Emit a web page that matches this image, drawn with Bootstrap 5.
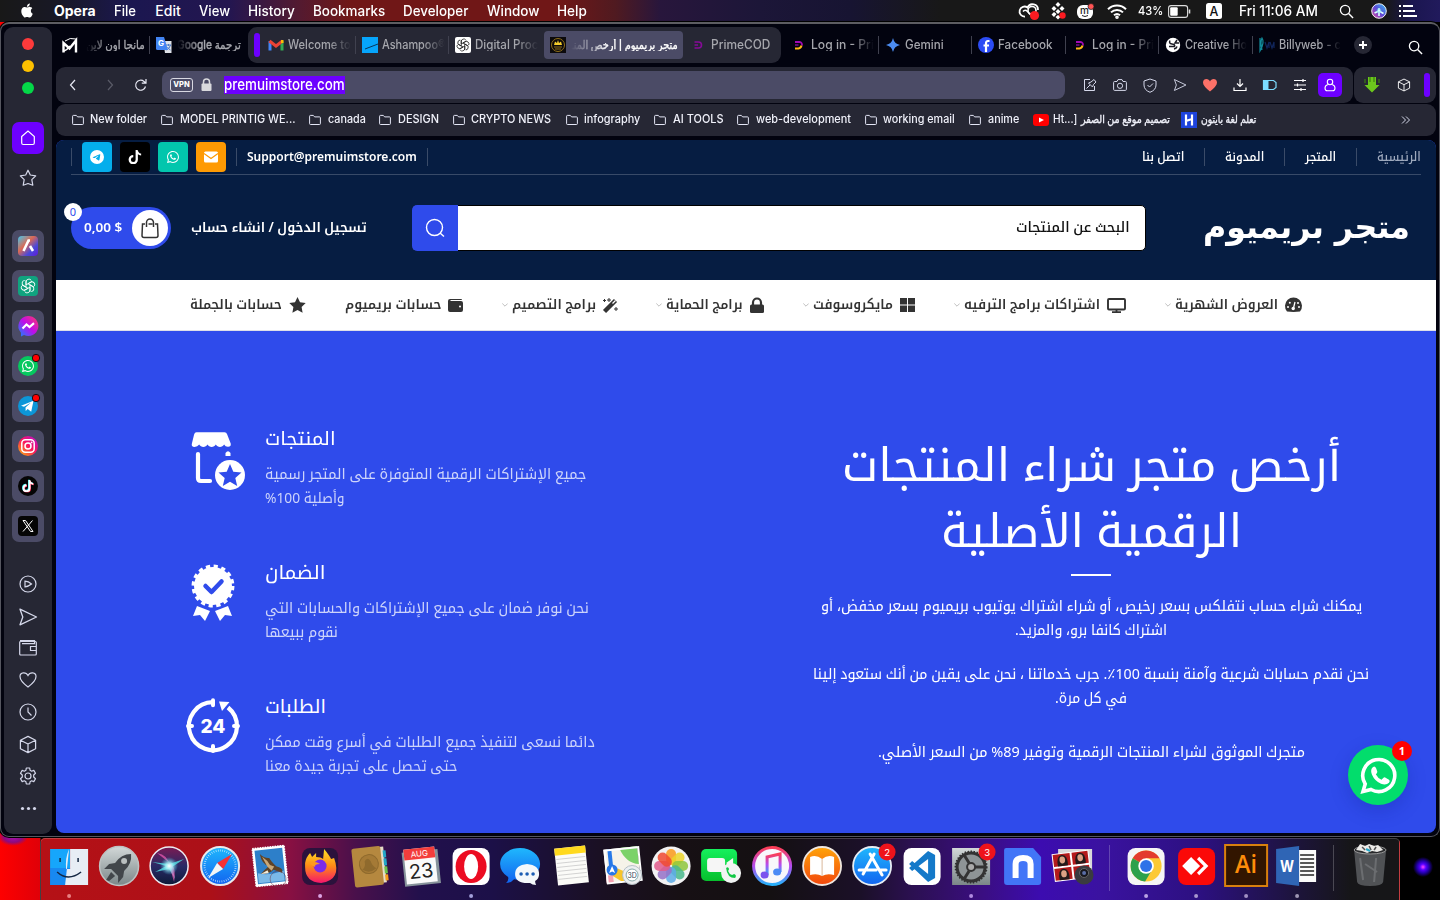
<!DOCTYPE html>
<html lang="ar">
<head>
<meta charset="utf-8">
<meta name="viewport" content="width=device-width, initial-scale=1">
<title>متجر بريميوم</title>
<link href="https://cdn.jsdelivr.net/npm/bootstrap@5.3.0/dist/css/bootstrap.min.css" rel="stylesheet">
<style>
:root{--panel:#262734;--ink:#02030f;--violet:#6d00ff;--brand:#2f4beb;--navy:#061d42}
body{width:1440px;height:900px;overflow:hidden;background:#000;font-family:Inter,"DejaVu Sans",sans-serif;color:#fff;line-height:1}
svg{display:block;flex:none;overflow:visible}
.fit{display:block;flex:none;white-space:nowrap;direction:ltr;text-align:left}
.fit>span{display:inline-block;transform-origin:0 50%}
.desktop{width:1440px;height:900px;background:radial-gradient(circle at 1423px 867px,#f4f 0,#50f 3px,#20a 6px,transparent 10px),radial-gradient(ellipse at 13px 837px,#a80fb0 0,#8c0a80 9px,transparent 15px),linear-gradient(90deg,#fe0000 0,#e00008 40px,#000 41px)}
.menubar{height:22px;font-size:14px;font-weight:500;line-height:22px;background:linear-gradient(90deg,#181818 0,#181826 60px,#1b1750 130px,#241650 230px,#541a30 300px,#701717 350px,#701717 560px,#501a20 615px,#28163c 660px,#1c1638 760px,#171432 850px,#181818 940px,#181818 1385px,#1b1650 1412px,#211a5c)}
.apple{margin:0 20px 2px}
.menus{gap:18.4px}
.status{display:grid;grid-template-columns:33px 25px 30px 31px 30px 38px 33px 100px 32px 28px 20px;align-items:center;margin-right:21px}
.window{height:815px;border:1px solid #55565f;border-top:2px solid #5d5d62;background:var(--ink);border-radius:9px;padding:3px 3px 2px 3px;box-shadow:0 0 0 1px #000}
.rail{width:48px;height:807px;background:var(--panel);border-radius:9px;margin-right:4px}
.lights{padding-top:10.5px;gap:10px}
.light{width:12px;height:12px;border-radius:50%}
.app{width:32px;height:32px;border-radius:7px;background:#4b4b66}
.home{background:var(--violet);margin-top:28px}
.star{margin:15px 0 43px}
.pad-l{width:100%;color:#d5d8ea;gap:14px;margin-top:33px}
.stack{width:1380px}
.tabs{height:40px;font-size:12.5px;font-weight:500;color:#a6a7ad;padding-bottom:4px}
.tabs [dir=rtl]>span{font-size:11.5px;-webkit-text-stroke:.35px currentColor}
.tab{width:93.5px;height:18px;padding-left:6px;gap:4px;border-right:1px solid #40414f}
.tab.last{border-color:transparent}
.tabgroup{width:533px;height:36px;margin-left:5px;margin-right:4px;background:var(--panel);border-radius:9px;padding-left:6px}
.tabgroup .mark-bar{margin-right:2px}
.mark-bar{width:6px;height:24px;border-radius:3px;background:var(--violet)}
.active-tab{width:139px;height:28px;background:#4b4b66;border-radius:4px;color:#fff;padding-left:6px;margin:0 4px 0 1px;gap:5px}
.fade-end{-webkit-mask-image:linear-gradient(90deg,#000 65%,transparent)}
.fade-start{-webkit-mask-image:linear-gradient(270deg,#000 65%,transparent)}
.bar{height:36px;background:var(--panel);border-radius:9px}
.url{width:903px;height:28px;border-radius:8px;background:#4b4b66}
.picked{background:var(--violet);font-size:15.5px;line-height:18px;font-weight:500;margin-left:4px}
.vpn{font-size:7.5px;font-weight:800;line-height:11px;border:1.4px solid #d8d8e2;border-radius:3px;padding:0;width:23px;height:14px;text-align:center}
.tools{display:grid;grid-template-columns:repeat(9,30px);justify-items:center;align-items:center;margin-left:10px}
.me-btn{width:24px;height:24px;border-radius:5px;background:var(--violet)}
.bar.marks{height:32px;margin:1px 0 4px;font-size:11.5px;font-weight:500;padding-left:16px;gap:14.3px;color:#f0f1fa}
.marks>div{gap:4px}
.marks .nm{margin-left:2.2px}
.marks [dir=rtl]>span{font-size:11px;-webkit-text-stroke:.35px currentColor}
.site{height:693px;border-radius:8px;overflow:hidden;background:var(--brand);font-family:"Noto Sans","Noto Kufi Arabic","Noto Sans Arabic","DejaVu Sans",sans-serif}
.site-head{height:140px;background:var(--navy)}
.topline{height:35px;margin:0 15px;border-bottom:1px solid #384a68;font-size:12.5px}
.top-nav{gap:20px;font-weight:500}
.vr2{width:1px;height:18px;background:#3a4b68;flex:none}
.soc{width:30px;height:30px;border-radius:4px}
.cart{width:100px;height:42px;border-radius:21px;background:var(--brand)}
.cart-count{position:absolute;left:-7px;top:-4px;width:18px;height:18px;border-radius:50%;background:#fff;color:var(--brand);font-size:11px;line-height:17px;text-align:center}
.bag{width:36px;height:36px;border-radius:50%;background:#fff;margin-right:3px}
.find{width:734px;height:46px;background:#fff;border:1px solid #000;border-radius:5px;color:#111;margin-left:45px}
.find-btn{width:46px;height:46px;margin:-1px 0 -1px -1px;background:var(--brand);border-radius:5px 0 0 5px}
.find-text{margin-right:15px;font-size:14px;font-weight:500;padding-bottom:3px}
.brandname{margin-left:57px;font-family:"DejaVu Sans",sans-serif;font-size:32px;line-height:40px;padding-bottom:2px}
.site-nav{height:51px;background:#fff;border-bottom:1px solid #dedfe8;color:#333;padding:0 134px;font-size:13.5px;font-weight:600}
.site-nav>div{gap:7px}
.chev{margin-right:-3px}
.feats{padding:93px 0 0 130px;width:690px}
.pitch{width:690px;padding-top:99px}
.lead-title{font-size:46px;line-height:66px}
.rule{width:40px;height:2px;margin:12px 0 17px}
.copy{font-size:15px;line-height:24px}
.feat{height:134px;gap:20px}
.feat-title{font-size:19px;line-height:29px;margin-bottom:8px}
.feat .copy{color:#cdd4fb}
.wa{position:absolute;right:28px;bottom:28px;width:60px;height:60px;border-radius:50%;background:#02dd6c;box-shadow:0 6px 18px #0b1c9040}
.wa-count{position:absolute;right:-4px;top:-4px;width:20px;height:20px;border-radius:50%;background:#f00;font-size:11px;font-weight:700;line-height:20px;text-align:center}
.dock{width:1360px;height:62px;margin:1px 0 0 40px;padding-left:3px;border:1px solid #ffffff30;border-bottom:0;border-radius:5px 5px 0 0;background:linear-gradient(90deg,#b51116 0,#ac1018 170px,#871042 250px,#49104b 315px,#22104c 380px,#1c1048 450px,#1a1023 560px,#171014 640px,#141012 730px,#1b1028 820px,#2b1050 870px,#3a0e80 940px,#3c0cb0 1000px,#3a12a0 1060px,#2c1080 1160px,#1c1438 1260px,#161618 1310px)}
.dock svg{width:50.2px;height:62px;margin-top:-1px}
.dsep{width:23px;height:46px;margin-top:6px}
.dsep i{display:block;width:1px;height:100%;background:#ffffff38;margin:auto}
</style>
</head>
<body>
<svg width="0" height="0" style="position:absolute" aria-hidden="true">
<defs>
<symbol id="folder" viewBox="0 0 12 12"><path d="M.6 2.200c0-.5.3-.8.8-.8h2.900l1.300 1.500h5c.5 0 .8.3.8.8v6c0 .5-.3.8-.8.8H1.400c-.5 0-.8-.3-.8-.8z" fill="none" stroke="#e4e6f5"/></symbol>
<symbol id="tg" viewBox="0 0 16 16"><path d="M16 8A8 8 0 1 1 0 8a8 8 0 0 1 16 0zM8.287 5.906c-.778.324-2.334.994-4.666 2.01-.378.15-.577.298-.595.442-.03.243.275.339.69.47l.175.055c.408.133.958.288 1.243.294.26.006.549-.1.868-.32 2.179-1.471 3.304-2.214 3.374-2.23.05-.012.12-.026.166.016.047.041.042.12.037.141-.03.129-1.227 1.241-1.846 1.817-.193.18-.33.307-.358.336a8.154 8.154 0 0 1-.188.186c-.38.366-.664.64.015 1.088.327.216.589.393.85.571.284.194.568.387.936.629.093.06.183.125.27.187.331.236.63.448.997.414.214-.02.435-.22.547-.82.265-1.417.786-4.486.906-5.751a1.426 1.426 0 0 0-.013-.315.337.337 0 0 0-.114-.217.526.526 0 0 0-.31-.093c-.3.005-.763.166-2.984 1.09z"/></symbol>
<symbol id="tt" viewBox="0 0 16 16"><path d="M9 0h1.980c.144.715.54 1.617 1.235 2.512C12.895 3.389 13.797 4 15 4v2.300c-1.753 0-3.070-.814-3.700-1.629V11a5.300 5.300 0 1 1-5.300-5.300v2.600a2.700 2.700 0 1 0 2.700 2.700V0Z"/></symbol>
<symbol id="wa" viewBox="0 0 16 16"><path d="M13.601 2.326A7.854 7.854 0 0 0 7.994 0C3.627 0 .068 3.558.064 7.926c0 1.399.366 2.76 1.057 3.965L0 16l4.204-1.102a7.933 7.933 0 0 0 3.79.965h.004c4.368 0 7.926-3.558 7.93-7.93A7.898 7.898 0 0 0 13.6 2.326zM7.994 14.521a6.573 6.573 0 0 1-3.356-.92l-.24-.144-2.494.654.666-2.433-.156-.251a6.56 6.56 0 0 1-1.007-3.505c0-3.626 2.957-6.584 6.591-6.584a6.56 6.56 0 0 1 4.66 1.931 6.557 6.557 0 0 1 1.928 4.66c-.004 3.639-2.961 6.592-6.592 6.592zm3.615-4.934c-.197-.099-1.17-.578-1.353-.646-.182-.065-.315-.099-.445.099-.133.197-.513.646-.627.775-.114.133-.232.148-.43.05-.197-.1-.836-.308-1.592-.985-.59-.525-.985-1.175-1.103-1.372-.114-.198-.011-.304.088-.403.087-.088.197-.232.296-.346.1-.114.133-.198.198-.33.065-.134.034-.248-.015-.347-.05-.099-.445-1.076-.612-1.47-.16-.389-.323-.335-.445-.34-.114-.007-.247-.007-.38-.007a.729.729 0 0 0-.529.247c-.182.198-.691.677-.691 1.654 0 .977.71 1.916.81 2.049.098.133 1.394 2.132 3.383 2.992.47.205.84.326 1.129.418.475.152.904.129 1.246.08.38-.058 1.171-.48 1.338-.943.164-.464.164-.86.114-.943-.049-.084-.182-.133-.38-.232z"/></symbol>
<symbol id="knot" viewBox="0 0 16 16"><g fill="none" stroke="currentColor" stroke-width=".9"><path id="loop" d="M6 9.200V4a2.900 2.900 0 0 1 5.300-1.600M8 5.700l4-2.300"/><use href="#loop" transform="rotate(60 8 8)"/><use href="#loop" transform="rotate(120 8 8)"/><use href="#loop" transform="rotate(180 8 8)"/><use href="#loop" transform="rotate(240 8 8)"/><use href="#loop" transform="rotate(300 8 8)"/></g></symbol>
<symbol id="prime" viewBox="0 0 16 16"><path d="M4 5h4.500a2.500 2.500 0 0 1 2.300 3.500" fill="none" stroke="#a10ab5" stroke-width="1.800"/><path d="M4 8h3.500" stroke="#a10ab5" stroke-width="1.200"/><path d="M4 11.500h3.500q2.500-.5 3-3" fill="none" stroke="#fdb813" stroke-width="2"/></symbol>
<symbol id="mag" viewBox="0 0 16 16"><circle cx="6.500" cy="6.500" r="5" fill="none" stroke="#fff" stroke-width="1.400"/><path d="M10.200 10.200 15 15" stroke="#fff" stroke-width="1.500"/></symbol>
<symbol id="chev" viewBox="0 0 6 6"><path d="m.3 1.500 2.700 2.700L5.700 1.500" fill="none" stroke="#b8b8b8" stroke-width=".9"/></symbol>
<symbol id="send" viewBox="0 0 20 20"><path d="M2 2.200 18.500 10 2 17.800 4.800 10z" fill="none" stroke="currentColor" stroke-width="1.300" stroke-linejoin="round"/></symbol>
<symbol id="cube" viewBox="0 0 20 20"><path d="M10 1.500 18 5.500v9L10 18.500 2 14.500v-9zM2 5.500l8 4 8-4M10 9.500v9" fill="none" stroke="currentColor" stroke-width="1.300" stroke-linejoin="round"/></symbol>
<linearGradient id="sky" x2="0" y2="1"><stop stop-color="#1fb8fd"/><stop offset="1" stop-color="#1263f0"/></linearGradient>
<linearGradient id="steel" x2="0" y2="1"><stop stop-color="#d2d8d8"/><stop offset="1" stop-color="#7b8688"/></linearGradient>
<linearGradient id="insta" x1="1" y1="0" x2=".1" y2="1"><stop stop-color="#b012d8"/><stop offset=".5" stop-color="#f9135f"/><stop offset="1" stop-color="#fdb10c"/></linearGradient>
<linearGradient id="msgr" x1="1" y1="0" x2="0" y2="1"><stop stop-color="#fe3a66"/><stop offset=".5" stop-color="#c00bea"/><stop offset="1" stop-color="#0a8cff"/></linearGradient>
<linearGradient id="siri" x1="1" y1="0" x2="0" y2="1"><stop stop-color="#34c6f0"/><stop offset=".5" stop-color="#5a4bd8"/><stop offset="1" stop-color="#e64a9c"/></linearGradient>
<linearGradient id="aria" x1="0" y1="0" x2="1" y2="1"><stop stop-color="#44c8f0"/><stop offset=".4" stop-color="#dc6a54"/><stop offset=".7" stop-color="#4a49d8"/><stop offset="1" stop-color="#5f1ad8"/></linearGradient>
<linearGradient id="flame" x2="0" y2="1"><stop stop-color="#ffe226"/><stop offset=".5" stop-color="#ff8a16"/><stop offset="1" stop-color="#f5156c"/></linearGradient>
<linearGradient id="orange" x2="0" y2="1"><stop stop-color="#ffa40a"/><stop offset="1" stop-color="#f2470c"/></linearGradient>
<linearGradient id="green" x2="0" y2="1"><stop stop-color="#15f05d"/><stop offset="1" stop-color="#07bf2d"/></linearGradient>
<linearGradient id="song" x2="0" y2="1"><stop stop-color="#fb3d56"/><stop offset=".5" stop-color="#b64cf0"/><stop offset="1" stop-color="#27b1fb"/></linearGradient>
<linearGradient id="dusk" x2="0" y2="1"><stop stop-color="#7c1a52"/><stop offset=".5" stop-color="#2a2a66"/><stop offset="1" stop-color="#0d1a38"/></linearGradient>
<radialGradient id="glow"><stop stop-color="#fff"/><stop offset=".4" stop-color="#a5f6fa" stop-opacity=".8"/><stop offset="1" stop-color="#4bd" stop-opacity="0"/></radialGradient>
</defs></svg>

<div class="desktop d-flex flex-column">
<header class="menubar d-flex align-items-center">
  <svg class="apple" width="14" height="15" viewBox="0 0 16 16" fill="#fff"><path d="M11.182.008C11.148-.03 9.923.023 8.857 1.18c-1.066 1.156-.902 2.482-.878 2.516.024.034 1.52.087 2.475-1.258.955-1.345.762-2.391.728-2.43Zm3.314 11.733c-.048-.096-2.325-1.234-2.113-3.422.212-2.189 1.675-2.789 1.698-2.854.023-.065-.597-.79-1.254-1.157a3.692 3.692 0 0 0-1.563-.434c-.108-.003-.483-.095-1.254.116-.508.139-1.653.589-1.968.607-.316.018-1.256-.522-2.267-.665-.647-.125-1.333.131-1.824.328-.49.196-1.422.754-2.074 2.237-.652 1.482-.311 3.83-.067 4.56.244.729.625 1.924 1.273 2.796.576.984 1.34 1.667 1.659 1.899.319.232 1.219.386 1.843.067.502-.308 1.408-.485 1.766-.472.357.013 1.061.154 1.782.539.571.197 1.111.115 1.652-.105.541-.221 1.324-1.059 2.238-2.758.347-.79.505-1.217.473-1.282Z"/></svg>
  <nav class="menus d-flex">
    <b class="fit" data-w="42">Opera</b><span class="fit" data-w="22.500">File</span><span class="fit" data-w="25">Edit</span><span class="fit" data-w="31">View</span><span class="fit" data-w="46.500">History</span><span class="fit" data-w="72">Bookmarks</span><span class="fit" data-w="65">Developer</span><span class="fit" data-w="52">Window</span><span class="fit" data-w="30">Help</span>
  </nav>
  <div class="status ms-auto">
    <svg width="21" height="18" fill="none" stroke="#fff"><path d="M6 14.500a5 5 0 1 1 2.500-9A5.500 5.500 0 0 1 19 8" stroke-width="1.800"/><circle cx="13" cy="8.500" r="4" stroke-width="1.600"/><path d="m4 9.500q2-2.500 4.500 0l4 4" stroke-width="1.600"/><circle cx="15.500" cy="13.500" r="4.600" fill="#fb1b21" stroke="none"/></svg>
    <svg width="14" height="18" fill="#fff"><path d="M6 0l2.500 2.500L6 5 3.500 2.500zM2 4l2.500 2.500L2 9-.5 6.500zM10 4l2.500 2.500L10 9 7.500 6.500zM6 7l2.500 2.500L6 12 3.500 9.500zM2 10l2.500 2L2 15l-2.500-2.500zM6 13l2.500 2L6 17.500 3.500 15z"/><circle cx="10.500" cy="13.500" r="3.200" fill="#fb1b21"/></svg>
    <svg width="17" height="18"><rect y="3" width="16" height="14" rx="6" fill="#fff"/><text x="3" y="12" font-size="10" font-weight="500" fill="#222">m</text><path d="M5 13.500q3 2 6 0" stroke="#222" fill="none"/><circle cx="14" cy="4.500" r="3" fill="#ff5454" stroke="#181818" stroke-width=".7"/></svg>
    <svg width="20" height="15" fill="none" stroke="#fff" stroke-width="2"><path d="M1 5.200a13 13 0 0 1 18 0M4 8.400a8.500 8.500 0 0 1 12 0M7 11.300a4.500 4.500 0 0 1 6 0"/><circle cx="10" cy="13.300" r=".8"/></svg>
    <span class="fit" data-w="25" style="font-size:12px">43%</span>
    <svg width="23" height="13"><rect x=".6" y=".6" width="19" height="11.800" rx="2.500" fill="none" stroke="#ddd" stroke-width="1.100"/><rect x="2.200" y="2.200" width="7.500" height="8.600" rx="1" fill="#fff"/><path d="M21.500 4.500v4" stroke="#ddd" stroke-width="1.600"/></svg>
    <svg width="16" height="16"><rect width="16" height="16" rx="2.500" fill="#fff"/><text x="8" y="12.500" text-anchor="middle" font-size="12.500" font-weight="500" fill="#111">A</text></svg>
    <span class="fit" data-w="79">Fri 11:06 AM</span>
    <svg width="15" height="15"><use href="#mag"/></svg>
    <svg width="16" height="16"><circle cx="8" cy="8" r="7.300" fill="url(#siri)" stroke="#fff" stroke-width=".9"/><path d="M8 5v8M8 8 3.500 10M8 8l4.500 2.500" stroke="#dff" stroke-width="1.600" fill="none"/><circle cx="8" cy="7.500" r="3" fill="url(#glow)"/></svg>
    <svg width="18" height="12" stroke="#fff" stroke-width="2"><path d="M0 1h2M4 1h10M0 6h2M4 6h12M0 11h2M4 11h14"/></svg>
  </div>
</header>

<main class="window d-flex">
  <aside class="rail d-flex flex-column align-items-center">
    <div class="lights d-flex flex-column"><div class="light" style="background:#fd3a3b"></div><div class="light" style="background:#fdc000"></div><div class="light" style="background:#04d848"></div></div>
    <div class="app home d-flex align-items-center justify-content-center"><svg width="16" height="16"><path d="M1.700 6.500 8 1l6.300 5.500V13c0 1-.5 1.500-1.500 1.500H3.200c-1 0-1.500-.5-1.500-1.500z" fill="none" stroke="#fff" stroke-width="1.200"/></svg></div>
    <svg class="star" width="18" height="18"><path d="M9 1.200 11.300 6l5.400.8-3.900 3.900 1 5.500L9 14.500l-4.800 1.700 1-5.500L1.300 6.800 6.700 6z" fill="none" stroke="#d5d8ea" stroke-width="1.200" stroke-linejoin="round"/></svg>
    <div class="d-flex flex-column gap-2 align-items-center">
      <div class="app p-1"><svg width="24" height="24"><rect x="2" y="2" width="20" height="20" rx="4" fill="url(#aria)"/><path d="m7.500 17 5-10.500h1.500M14 12l3 5" fill="none" stroke="#fff" stroke-width="2.600"/></svg></div>
      <div class="app p-1"><svg width="24" height="24" color="#fff"><rect x="2" y="2" width="20" height="20" rx="4" fill="#10a37f"/><use href="#knot" x="4" y="4" width="16" height="16"/></svg></div>
      <div class="app p-1"><svg width="24" height="24"><path d="M12 2a10 10 0 1 1-4 19l-3 1.500v-3.800A10 10 0 0 1 12 2z" fill="url(#msgr)"/><path d="m6.500 14.500 4-4 3 2.500 4.500-3.800" fill="none" stroke="#fff" stroke-width="2.200"/></svg></div>
      <div class="app p-1"><svg width="24" height="24"><circle cx="12" cy="12" r="10" fill="#06c85f"/><use href="#wa" x="6" y="6" width="12" height="12" fill="#fff"/><circle cx="20" cy="4" r="3.700" fill="#fe0000" stroke="#1b0b12"/></svg></div>
      <div class="app p-1"><svg width="24" height="24"><circle cx="12" cy="12" r="10" fill="#0c96d8"/><path d="m5 11.700 12.500-5-2.300 11-3.500-2.600-2 2-.2-3.600 5.500-5-7 4.300z" fill="#fff"/><circle cx="20" cy="4" r="3.700" fill="#fe0000" stroke="#1b0b12"/></svg></div>
      <div class="app p-1"><svg width="24" height="24"><circle cx="12" cy="12" r="10" fill="url(#insta)"/><g fill="none" stroke="#fff" stroke-width="1.500"><rect x="5.800" y="5.800" width="12.400" height="12.400" rx="3.500"/><circle cx="12" cy="12" r="3"/></g><circle cx="15.600" cy="8.400" r=".9" fill="#fff"/></svg></div>
      <div class="app p-1"><svg width="24" height="24"><circle cx="12" cy="12" r="10" fill="#050505"/><use href="#tt" x="5.500" y="5.500" width="12" height="12" fill="#25f4ee"/><use href="#tt" x="6.500" y="6.500" width="12" height="12" fill="#fe2c55"/><use href="#tt" x="6" y="6" width="12" height="12" fill="#fff"/></svg></div>
      <div class="app p-1"><svg width="24" height="24"><rect x="2" y="2" width="20" height="20" rx="4" fill="#050505"/><path d="M7 6.500h2.500L17 17.500h-2.500zM16.500 6.500 7 17.500" fill="none" stroke="#fff"/></svg></div>
    </div>
    <div class="pad-l d-flex flex-column align-items-center">
      <svg width="18" height="18"><circle cx="9" cy="9" r="8" fill="none" stroke="currentColor" stroke-width="1.200"/><path d="M6 6.200v5.600q3.500-.3 6.500-2.800-3-2.600-6.500-2.800z" fill="none" stroke="currentColor" stroke-width="1.200"/></svg>
      <svg width="20" height="18"><use href="#send" width="20" height="20"/></svg>
      <svg width="18" height="18" fill="none" stroke="currentColor" stroke-width="1.200"><rect x=".7" y="2.500" width="16.600" height="13.500" rx="1"/><path d="M1 1.700h14.500v3H3M17 7.500h-5.500v4H17"/></svg>
      <svg width="18" height="18"><path d="M9 16C5 13 1 9.500 1 5.500 1 1 7 .5 9 4.500 11 .5 17 1 17 5.500 17 9.500 13 13 9 16z" fill="none" stroke="currentColor" stroke-width="1.200"/></svg>
      <svg width="18" height="18" fill="none" stroke="currentColor" stroke-width="1.200"><circle cx="9" cy="9" r="8"/><path d="M9 4.500V9l3.500 3.500"/></svg>
      <svg width="20" height="18"><use href="#cube" width="20" height="19"/></svg>
      <svg width="18" height="18" viewBox="0 0 18 18" fill="none" stroke="currentColor" stroke-width="1.200"><circle cx="9" cy="9" r="3"/><path d="M7.300 1h3.400l.4 2.300 1.500.9 2.200-.8 1.700 2.900L14.700 8v2l1.800 1.700-1.700 2.900-2.200-.8-1.500.9-.4 2.300H7.300l-.4-2.300-1.500-.9-2.200.8-1.700-2.900L3.300 10V8L1.500 6.300l1.700-2.900 2.200.8 1.500-.9z" stroke-linejoin="round"/></svg>
      <svg width="18" height="18" fill="currentColor"><circle cx="3.500" cy="9.500" r="1.600"/><circle cx="9.500" cy="9.500" r="1.600"/><circle cx="15.500" cy="9.500" r="1.600"/></svg>
    </div>
  </aside>

  <section class="stack d-flex flex-column">
    <div class="tabs d-flex align-items-center">
      <div class="tab d-flex align-items-center"><svg width="16" height="16" fill="none" stroke="#fff" stroke-width="2.400"><path d="M1.500 15.500V6l6 5.500 6.500-8v12"/><path d="M2 14q3-1 6-5" stroke-width="1.400"/><path d="M3 4Q8 0 14 2" stroke-width="1"/></svg><span class="fit fade-start ms-1" data-w="59" dir="rtl">مانجا اون لاين</span></div>
      <div class="tab last d-flex align-items-center"><svg width="17" height="16"><path d="M7 4h8.500v12H9z" fill="#dfe2e8"/><path d="M10 8h5M12.500 7v2m2-1q-1 4-4 5m1-3q1 2 3 3" stroke="#4c7ac6" fill="none"/><path d="M0 0h8l4 13H1.500Q0 13 0 11.500z" fill="#4284f3"/><text x="2" y="9" font-size="8" font-weight="700" fill="#fff">G</text></svg><span class="fit fade-start" data-w="64" dir="rtl">ترجمة Google</span></div>
      <div class="tabgroup d-flex align-items-center">
        <i class="mark-bar"></i>
        <div class="tab d-flex align-items-center"><svg width="16" height="16"><path d="M2 13.500V4" stroke="#4285f4" stroke-width="3"/><path d="M14 13.500V4" stroke="#34a853" stroke-width="3"/><path d="m1.500 4 6.500 5 6.500-5" fill="none" stroke="#ea4335" stroke-width="3"/><path d="M13 4.500h2.500" stroke="#fbbc04" stroke-width="3"/></svg><span class="fit fade-end" data-w="63">Welcome to</span></div>
        <div class="tab d-flex align-items-center"><svg width="16" height="16"><path d="M0 0h16v16H0z" fill="#06a5fb"/><path d="M3 12 16 7" stroke="#07365b"/></svg><span class="fit fade-end" data-w="63">Ashampoo®</span></div>
        <div class="tab last d-flex align-items-center"><svg width="16" height="16" color="#222"><rect width="16" height="16" rx="2" fill="#fff"/><use href="#knot" x="1" y="1" width="14" height="14"/></svg><span class="fit fade-end" data-w="63">Digital Proc</span></div>
        <div class="active-tab d-flex align-items-center"><svg width="16" height="16"><path d="M0 0h16v16H0z" fill="#0c0a0c"/><circle cx="8" cy="8" r="6.500" fill="none" stroke="#8f6e18"/><path d="m4 8 1-3.500L7 6l1-3 1 3 2-1.500L12 8z" fill="#f3cc2c"/><path d="M4 10h8M5 12h6" stroke="#8f6e18"/></svg><span class="fit fade-start" data-w="107" dir="rtl">متجر بريميوم | أرخص المنـ</span></div>
        <div class="tab last d-flex align-items-center ps-1"><svg width="16" height="16"><path d="M3.500 5h4a3 3 0 0 1 0 6h-4M3.500 8H7" fill="none" stroke="#860a98" stroke-width="1.600"/></svg><span class="fit" data-w="59">PrimeCOD</span></div>
      </div>
      <div class="tab d-flex align-items-center"><svg width="16" height="16"><use href="#prime"/></svg><span class="fit fade-end" data-w="63">Log in - Pri</span></div>
      <div class="tab d-flex align-items-center"><svg width="16" height="16"><path d="M8 1q1.200 5.800 7 7-5.800 1.200-7 7-1.200-5.800-7-7 5.800-1.200 7-7" fill="#4c8df3"/></svg><span class="fit" data-w="39">Gemini</span></div>
      <div class="tab d-flex align-items-center"><svg width="16" height="16"><circle cx="8" cy="8" r="8" fill="#2c4cf5"/><path d="M11.500 4H10Q8 4 8 6.500V15M5.500 8.500h5.500" stroke="#fff" stroke-width="2.200" fill="none"/></svg><span class="fit" data-w="55">Facebook</span></div>
      <div class="tab d-flex align-items-center"><svg width="16" height="16"><use href="#prime"/></svg><span class="fit fade-end" data-w="62">Log in - Pri</span></div>
      <div class="tab d-flex align-items-center"><svg width="16" height="16"><circle cx="8" cy="8" r="7.200" fill="#fff"/><path d="M5 3.500q-1.500 3 2 3.500t2.500 2.500H4M12 3l-2 3h4M9 12q2.500-.5 3-2.500" stroke="#1a1a22" stroke-width="1.500" fill="none"/></svg><span class="fit fade-end" data-w="62">Creative Ho</span></div>
      <div class="tab last d-flex align-items-center"><svg width="16" height="16" fill="none"><path d="M1 1v13Q6 5 3 1 1 5 3 13" stroke="#128c9b" stroke-width="1.200"/><path d="m6 5 2 6 2-6v6m1-6 2 6 2-6v6" stroke="#11265c" stroke-width="1.200"/></svg><span class="fit fade-end" data-w="62">Billyweb - c</span></div>
      <svg width="18" height="18" style="margin-left:8px"><circle cx="9" cy="9" r="9" fill="#262734"/><path d="M9 5v8M5 9h8" stroke="#fff" stroke-width="2"/></svg>
      <svg width="15" height="15" style="margin-left:36px;margin-top:5px"><use href="#mag"/></svg>
    </div>

    <div class="d-flex" style="gap:1px">
      <div class="bar d-flex align-items-center" style="width:1297px">
        <svg width="92" height="16" style="margin-left:12px;margin-right:2px" fill="none" stroke="#e8e9f4" stroke-width="1.200"><path d="M7 3 2.500 8 7 13"/><path d="m40 3 4.500 5L40 13" stroke="#5a5b68"/><path d="M77.500 9.500A5 5 0 1 1 76 4.500l1.500 1.300M78 2v4.200h-4.200"/></svg>
        <div class="url d-flex align-items-center">
          <span class="vpn ms-2">VPN</span>
          <svg width="11" height="14" class="mx-2"><path d="M2.500 6V4a3 3 0 0 1 6 0v2" fill="none" stroke="#d9d9dd" stroke-width="1.500"/><rect x=".5" y="5.500" width="10" height="7.500" rx="1" fill="#d9d9dd"/></svg>
          <span class="fit picked" data-w="121">premuimstore.com</span>
        </div>
        <div class="tools">
          <svg width="14" height="14" fill="none" stroke="#d5d8ea"><path d="M7 1.500H1.500v11h10V8M3.500 10.500 7 7M5.500 5l4 4 1-2.500 2.500-2.500-2-2.500L8 4z"/></svg>
          <svg width="14" height="14" fill="none" stroke="#d5d8ea"><path d="M.6 4.500q0-1 1-1H4L5 1.600h4l1 1.900h2.400q1 0 1 1v6.900q0 1-1 1H1.600q-1 0-1-1z"/><circle cx="7" cy="7.800" r="2.600"/></svg>
          <svg width="14" height="15" fill="none" stroke="#d5d8ea"><path d="M7 1 13 3v4q0 5-6 7.300Q1 12 1 7V3zM4.500 7l2 2 3.500-3.500"/></svg>
          <svg width="14" height="14" color="#d5d8ea"><use href="#send"/></svg>
          <svg width="16" height="14"><path d="M8 13.500Q1 8 1 4.500C1 0 7 0 8 3.500 9 0 15 0 15 4.500Q15 8 8 13.500z" fill="#fd7168"/></svg>
          <svg width="14" height="14" fill="none" stroke="#fff" stroke-width="1.200"><path d="M7 1v7M4 5.500l3 3 3-3M1 9.500v3h12v-3"/></svg>
          <svg width="16" height="12"><path d="M1.500 1.500h10l2.500 2v5l-2.500 2h-10z" fill="none" stroke="#7cdcff" stroke-width="1.200"/><path d="M2 2h4.500v8H2z" fill="#7cdcff"/></svg>
          <svg width="14" height="12" stroke="#fff" stroke-width="1.200"><path d="M1 1.500h12M1 6h12M1 10.500h12M10 0v3M4.500 4.500v3M8 9v3"/></svg>
          <div class="me-btn d-flex align-items-center justify-content-center"><svg width="12" height="14" fill="none" stroke="#fff" stroke-width="1.100"><circle cx="6" cy="4" r="2.700"/><path d="M3.800 6.500Q1 7.500 1 10q0 2.800 2.500 2.800h5Q11 12.800 11 10q0-2.500-2.800-3.500"/></svg></div>
        </div>
      </div>
      <div class="bar d-flex align-items-center" style="width:82px"><svg width="16" height="16" style="margin-left:10px"><path d="M4 0h8v8h3.500L8 15.500.5 8H4z" fill="#6cc71d"/><path d="M1 2v4M15 2v4M6 0v5M10 0v5" stroke="#3b7f12" stroke-width="1.200"/></svg><svg width="14" height="14" style="margin:0 13px 0 17px" color="#fff"><use href="#cube"/></svg><i class="mark-bar"></i></div>
    </div>

    <div class="bar marks d-flex align-items-center">
      <div class="d-flex align-items-center"><svg width="12" height="12"><use href="#folder"/></svg><span class="fit nm" data-w="57">New folder</span></div>
      <div class="d-flex align-items-center"><svg width="12" height="12"><use href="#folder"/></svg><span class="fit nm" data-w="115.500">MODEL PRINTIG WE...</span></div>
      <div class="d-flex align-items-center"><svg width="12" height="12"><use href="#folder"/></svg><span class="fit nm" data-w="37.500">canada</span></div>
      <div class="d-flex align-items-center"><svg width="12" height="12"><use href="#folder"/></svg><span class="fit nm" data-w="41">DESIGN</span></div>
      <div class="d-flex align-items-center"><svg width="12" height="12"><use href="#folder"/></svg><span class="fit nm" data-w="80.500">CRYPTO NEWS</span></div>
      <div class="d-flex align-items-center"><svg width="12" height="12"><use href="#folder"/></svg><span class="fit nm" data-w="56">infography</span></div>
      <div class="d-flex align-items-center"><svg width="12" height="12"><use href="#folder"/></svg><span class="fit nm" data-w="50.500">AI TOOLS</span></div>
      <div class="d-flex align-items-center"><svg width="12" height="12"><use href="#folder"/></svg><span class="fit nm" data-w="95">web-development</span></div>
      <div class="d-flex align-items-center"><svg width="12" height="12"><use href="#folder"/></svg><span class="fit nm" data-w="72">working email</span></div>
      <div class="d-flex align-items-center"><svg width="12" height="12"><use href="#folder"/></svg><span class="fit nm" data-w="31">anime</span></div>
      <div class="d-flex align-items-center"><svg width="16" height="12"><rect width="16" height="12" rx="3" fill="#f00"/><path d="m6 3.500 5 2.500-5 2.500z" fill="#fff"/></svg><span class="fit" data-w="24">Ht...]</span><span class="fit" data-w="89" dir="rtl">تصميم موقع من الصفر</span></div>
      <div class="d-flex align-items-center" style="margin-left:-3px"><svg width="16" height="16"><path d="M0 0h16v16H0z" fill="#1d43dc"/><path d="M5 2.500v11M11 2.500v11M5 9l6-2" stroke="#fff" stroke-width="2.200"/></svg><span class="fit" data-w="55" dir="rtl">تعلم لغة بايثون</span></div>
      <svg class="ms-auto" width="10" height="10" style="margin-right:25px" fill="none" stroke="#d5d8ea"><path d="m1 1.500 3.500 3.500L1 8.500M5 1.500 8.500 5 5 8.500"/></svg>
    </div>

    <article class="site position-relative">
      <div class="site-head">
        <div class="topline d-flex align-items-center">
          <i class="vr2"></i>
          <div class="d-flex gap-2" style="margin:0 10px">
            <span class="soc d-flex align-items-center justify-content-center" style="background:#04aeec"><svg width="14" height="14" fill="#fff"><use href="#tg"/></svg></span>
            <span class="soc d-flex align-items-center justify-content-center" style="background:#000"><svg width="14" height="14" fill="#fff"><use href="#tt"/></svg></span>
            <span class="soc d-flex align-items-center justify-content-center" style="background:#02c6ad"><svg width="12" height="12" fill="#fff"><use href="#wa"/></svg></span>
            <span class="soc d-flex align-items-center justify-content-center" style="background:#fe9a03"><svg width="14" height="12"><rect y=".5" width="14" height="11" rx="1.500" fill="#fff"/><path d="m0 2.500 7 5 7-5" fill="none" stroke="#fe9a03" stroke-width="1.200"/></svg></span>
          </div>
          <i class="vr2"></i><b class="fit" data-w="170" style="margin:0 10px;font-weight:600">Support@premuimstore.com</b><i class="vr2"></i>
          <nav class="top-nav d-flex align-items-center ms-auto"><span class="fit" data-w="42" dir="rtl">اتصل بنا</span><i class="vr2"></i><span class="fit" data-w="39" dir="rtl">المدونة</span><i class="vr2"></i><span class="fit" data-w="31" dir="rtl">المتجر</span><i class="vr2"></i><span class="fit" data-w="44" dir="rtl" style="color:#9ea9bd">الرئيسية</span></nav>
        </div>
        <div class="d-flex align-items-center" style="height:106px;padding-left:15px">
          <div class="cart position-relative d-flex align-items-center justify-content-between"><b class="fit" data-w="38" style="font-size:12.500px;margin-left:13px;font-weight:600">0,00 $</b><span class="bag d-flex align-items-center justify-content-center"><svg width="18" height="21" fill="none" stroke="#333" stroke-width="1.500"><path d="M4 6H1.500L1 17.500q0 2 2 2h12q2 0 2-2L16.500 6H14M7.500 6h4M5.500 9V4.500a3.500 3.500 0 0 1 7 0V9"/></svg></span><span class="cart-count">0</span></div>
          <b class="fit" data-w="176" dir="rtl" style="margin-left:20px;font-size:13.500px;font-weight:600">تسجيل الدخول / انشاء حساب</b>
          <div class="find d-flex align-items-center justify-content-between"><span class="find-btn d-flex align-items-center justify-content-center"><svg width="20" height="20" fill="none" stroke="#fff" stroke-width="1.400"><circle cx="9.500" cy="9.500" r="8"/><path d="m15 15 4 3.500"/></svg></span><span class="fit find-text" data-w="114" dir="rtl">البحث عن المنتجات</span></div>
          <b class="fit brandname" data-w="207" dir="rtl">متجر بريميوم</b>
        </div>
      </div>
      <nav class="site-nav d-flex justify-content-between align-items-center">
        <div class="d-flex align-items-center"><span class="fit" data-w="92" dir="rtl">حسابات بالجملة</span><svg width="17" height="16"><path d="m8.500 0 2.500 5.300 5.700.8-4.100 4 1 5.700-5.100-2.700-5.100 2.700 1-5.700-4.100-4L6 5.300z" fill="#333"/></svg></div>
        <div class="d-flex align-items-center"><span class="fit" data-w="96" dir="rtl">حسابات بريميوم</span><svg width="15" height="13"><path d="M2 0h11q1 0 1 1H2.500v1H13q2 0 2 2v7q0 2-2 2H2q-2 0-2-2V2Q0 0 2 0z" fill="#333"/><circle cx="12" cy="7.500" r="1" fill="#fff"/></svg></div>
        <div class="d-flex align-items-center"><svg class="chev" width="6" height="6"><use href="#chev"/></svg><span class="fit" data-w="84" dir="rtl">برامج التصميم</span><svg width="15" height="15"><path d="m1.500 13.500 11-11" stroke="#333" stroke-width="4.400"/><path d="m9.500 5.500 3-3" stroke="#fff" stroke-width="1.300"/><path d="M6 0v4M4 2h4M1.500 1v3M0 2.500h3M13 9v4M11 11h4" stroke="#333"/></svg></div>
        <div class="d-flex align-items-center"><svg class="chev" width="6" height="6"><use href="#chev"/></svg><span class="fit" data-w="77" dir="rtl">برامج الحماية</span><svg width="14" height="15"><rect y="6.500" width="14" height="8.500" rx="1.500" fill="#333"/><path d="M3 8V4.500a4 4 0 0 1 8 0V8" fill="none" stroke="#333" stroke-width="2.200"/></svg></div>
        <div class="d-flex align-items-center"><svg class="chev" width="6" height="6"><use href="#chev"/></svg><span class="fit" data-w="80" dir="rtl">مايكروسوفت</span><svg width="15" height="14" fill="#333"><path d="M0 0h7v6.500H0zM8 0h7v6.500H8zM0 7.500h7V14H0zM8 7.500h7V14H8z"/></svg></div>
        <div class="d-flex align-items-center"><svg class="chev" width="6" height="6"><use href="#chev"/></svg><span class="fit" data-w="136" dir="rtl">اشتراكات برامج الترفيه</span><svg width="19" height="15" fill="none" stroke="#333"><rect x="1" y="1" width="17" height="10.500" rx="1" stroke-width="1.900"/><path d="M5 14.200h9M9.500 11v3" stroke-width="1.800"/></svg></div>
        <div class="d-flex align-items-center"><svg class="chev" width="6" height="6"><use href="#chev"/></svg><span class="fit" data-w="103" dir="rtl">العروض الشهرية</span><svg width="17" height="14"><path d="M2 13.500a8.500 8.500 0 1 1 13 0q-6.500.8-13 0z" fill="#333"/><path d="m8.500 10 1.500-6" stroke="#fff" stroke-width="1.300"/><g fill="#fff"><circle cx="8.200" cy="10.500" r="1.700"/><circle cx="3" cy="9" r="1"/><circle cx="4.800" cy="4.800" r="1"/><circle cx="14" cy="9" r="1"/><circle cx="13" cy="5" r="1"/></g></svg></div>
      </nav>

      <section class="d-flex" style="height:502px">
        <div class="feats d-flex flex-column">
          <div class="feat d-flex"><svg width="59" height="66" fill="#fff"><path d="M10 8.300h28q2 0 2.600 2l3.600 9.200q.6 3.300-2.600 3.300a4.300 4.300 0 0 1-4-2.200 4.900 4.900 0 0 1-8.300 0 4.900 4.900 0 0 1-8.300 0 4.900 4.900 0 0 1-8.300 0Q11 23 8 23q-3.500-.2-2.600-3.500l2.200-9q.6-2.200 2.400-2.200z" transform="translate(.5 0)"/><path d="M12 30v24q0 3 3 3h9" fill="none" stroke="#fff" stroke-width="4.200" stroke-linecap="round"/><path d="M39.500 32v-3q2.500-3.500 5 0v3z"/><circle cx="44" cy="51" r="15"/><path d="m44 40 3.300 7.700 8.200.8-6.200 5.400 1.900 8.100-7.200-4.300-7.200 4.300 1.900-8.100-6.200-5.400 8.200-.8z" fill="#2f4beb"/></svg>
            <div><div class="feat-title fit" data-w="71" dir="rtl">المنتجات</div><div class="copy fit" data-w="321" dir="rtl">جميع الإشتراكات الرقمية المتوفرة على المتجر رسمية</div><div class="copy fit" data-w="80" dir="rtl">وأصلية 100%</div></div></div>
          <div class="feat d-flex"><svg width="59" height="70"><path d="m11 46-4 10 7-1 5 6 5-10zM42 46l4 10-7-1-5 6-5-10z" fill="#fff" transform="translate(0 2)"/><circle cx="27" cy="28" r="19" fill="#fff"/><circle cx="27" cy="28" r="19.700" fill="none" stroke="#fff" stroke-width="3.500" stroke-dasharray="4.200 3.540"/><path d="m19.500 28 6 6L35.500 23.500" fill="none" stroke="#2f4beb" stroke-width="4.500" stroke-linecap="round" stroke-linejoin="round"/></svg>
            <div><div class="feat-title fit" data-w="61" dir="rtl">الضمان</div><div class="copy fit" data-w="324" dir="rtl">نحن نوفر ضمان على جميع الإشتراكات والحسابات التي</div><div class="copy fit" data-w="73" dir="rtl">نقوم ببيعها</div></div></div>
          <div class="feat d-flex"><svg width="59" height="70"><path d="M27 10.200A24 24 0 1 0 42 15.500" fill="none" stroke="#fff" stroke-width="4.200"/><path d="M33 9.500 43.500 10 36 19z" fill="#fff"/><path d="M27 8.200v5M27 59v-5M2 34h4M52 34h-4" stroke="#fff" stroke-width="4" stroke-linecap="round"/><text x="27" y="40.500" text-anchor="middle" font-family="Inter" font-weight="800" font-size="19" fill="#fff">24</text></svg>
            <div><div class="feat-title fit" data-w="61" dir="rtl">الطلبات</div><div class="copy fit" data-w="330" dir="rtl">دائما نسعى لتنفيذ جميع الطلبات في أسرع وقت ممكن</div><div class="copy fit" data-w="193" dir="rtl">حتى تحصل على تجربة جيدة معنا</div></div></div>
        </div>
        <div class="pitch d-flex flex-column align-items-center">
          <div class="lead-title fit" data-w="499" dir="rtl">أرخص متجر شراء المنتجات</div>
          <div class="lead-title fit" data-w="301" dir="rtl">الرقمية الأصلية</div>
          <div class="rule bg-white"></div>
          <div class="copy fit" data-w="541" dir="rtl">يمكنك شراء حساب نتفلكس بسعر رخيص، أو شراء اشتراك يوتيوب بريميوم بسعر مخفض، أو</div>
          <div class="copy fit" data-w="152" dir="rtl">اشتراك كانفا برو، والمزيد.</div>
          <div class="copy fit" data-w="556" dir="rtl" style="margin-top:20px">نحن نقدم حسابات شرعية وآمنة بنسبة 100٪. جرب خدماتنا ، نحن على يقين من أنك ستعود إلينا</div>
          <div class="copy fit" data-w="72" dir="rtl">في كل مرة.</div>
          <div class="copy fit" data-w="427" dir="rtl" style="margin-top:30px">متجرك الموثوق لشراء المنتجات الرقمية وتوفير 89% من السعر الأصلي.</div>
        </div>
      </section>
      <div class="wa d-flex align-items-center justify-content-center"><svg width="37" height="37" fill="none" stroke="#fff"><path d="M3 34.500 5.200 27A16 16 0 1 1 11 32.500z" stroke-width="3.600"/><path d="M12 11q2.500-3 4 0l1.300 3.500q.2 1.500-1.500 2.700 2 4 5.700 5.500l2-2q1-.8 2.500.2l3 1.800q1.500 1 0 3-3 3-8 1-6.500-3-9-9-1.700-4 0-6.700z" fill="#fff" stroke="none"/></svg><span class="wa-count">1</span></div>
    </article>
  </section>
</main>

<footer class="dock d-flex">
<svg viewBox="0 0 50 62"><path d="M6 11h20v36H6z" fill="#16a6fb"/><path d="M26 11h18v36H26z" fill="#e7edf5"/><path d="M6 30h20v17H6z" fill="#196be8" opacity=".5"/><path d="M25 11q-4 9-3 20h6v16H21" fill="#e7edf5"/><path d="M16 20v4M34 20v4M13 34q11 10 24 0" fill="none" stroke="#142743" stroke-width="1.500"/><circle cx="25" cy="58" r="2" fill="#ffb0b0" opacity=".7"/></svg>
<svg viewBox="0 0 50 62"><circle cx="25" cy="28" r="19.500" fill="url(#steel)" stroke="#bec3c3" stroke-width="1.500"/><path d="M37 16q-10 0-16 9l-6 1-5 5h7l7 7v7l5-6 1-6q8-7 7-17zM17 34l4 4-6 5-3-1z" fill="#42474b"/><circle cx="30" cy="23" r="3" fill="#b9bfbf"/></svg>
<svg viewBox="0 0 50 62"><circle cx="25" cy="28" r="19" fill="url(#dusk)" stroke="#ececf2" stroke-width="1.500"/><path d="m8 24 17 2 15-5-12 8 3 12-6-10-14 3 11-6z" fill="#4fd8dc" opacity=".85"/><path d="M13 15q11 2 12 12l5 17q2-13-2-17z" fill="#f25bb5" opacity=".7"/><circle cx="25" cy="28" r="9" fill="url(#glow)"/></svg>
<svg viewBox="0 0 50 62"><circle cx="25" cy="28" r="19" fill="url(#sky)" stroke="#e9eaec" stroke-width="2"/><circle cx="25" cy="28" r="15.500" fill="none" stroke="#d5effd" stroke-width="2" stroke-dasharray=".6 1.600"/><path d="m37 16-15 9 6 6z" fill="#f53135"/><path d="m13 40 9-15 6 6z" fill="#f5f5f5"/></svg>
<svg viewBox="0 0 50 62"><g transform="rotate(-6 25 28)"><path d="M10 10h30v36H10z" fill="#2d7fc9" stroke="#fff" stroke-width="2.200"/><path d="M9 9h32v38H9z" fill="none" stroke="#fff" stroke-width="1.500" stroke-dasharray="1.500 1"/><path d="M12 34q12 4 26 0v10H12z" fill="#7bb9e8"/><path d="M16 15q1 11 8 13-6 4-9 7 8 1 13-3l8 4q3-4-5-7-5-6-6-9-5 0-9-5z" fill="#5e4327"/><path d="M18 18q5 4 7 9l4 2-3 4-4-5z" fill="#c9a878"/><path d="m15 35 7-3 1 3z" fill="#f3ecd9"/></g><circle cx="33" cy="41" r="8" fill="none" stroke="#6a3a48" stroke-opacity=".5"/></svg>
<svg viewBox="0 0 50 62"><rect x="7" y="10" width="36" height="37" rx="8" fill="#2b123c"/><path d="M10 25q1-6 5-10l2 4 4-4v4q5 0 7 2l1-10q5 6 7 10l3-1q8 22-13 25-16-1-16-16z" fill="url(#flame)"/><circle cx="25" cy="28" r="6.500" fill="#7c2be8"/><path d="M13 24q8-1 12 2-6 0-5 3-4-2-7-5z" fill="#ff9a1c"/><circle cx="25" cy="58" r="2" fill="#dca4e4"/></svg>
<svg viewBox="0 0 50 62"><g transform="rotate(-6 25 28)"><path d="M12 10h28v36H12z" fill="#e7ddc8"/><path d="M39 14h3v7h-3zM39 22h3v7h-3z" fill="#23a6c8"/><path d="M39 30h3v7h-3z" fill="#6cc24a"/><path d="M39 38h3v6h-3z" fill="#f59c1a"/><rect x="8" y="9" width="29" height="39" rx="2" fill="#b5883f"/><circle cx="24" cy="26" r="9.500" fill="#a57a36" stroke="#8f6a2d"/><path d="M17 31q4-3 3-8 3-5 6 0 1 5 5 8-7 5-14 0z" fill="#8f6a2d"/></g></svg>
<svg viewBox="0 0 50 62"><g transform="rotate(-6 25 28)"><path d="M8 13h36v34H8z" fill="#86929a"/><path d="M10 10h31v35H10z" fill="#fafafa"/><path d="M10 10h31v11H10z" fill="#f33d3c"/><text x="25.500" y="18.500" text-anchor="middle" font-size="8" fill="#fff">AUG</text><text x="25.500" y="40" text-anchor="middle" font-size="20" fill="#222">23</text></g></svg>
<svg viewBox="0 0 50 62"><rect x="6.500" y="10" width="37" height="37" rx="8" fill="#fff"/><ellipse cx="25" cy="28.500" rx="15.500" ry="16.500" fill="#ec0c22"/><ellipse cx="25" cy="28.500" rx="7" ry="12.500" fill="#fff"/><circle cx="25" cy="58" r="2" fill="#a3a0da"/></svg>
<svg viewBox="0 0 50 62"><path d="M24 10c11 0 20 7 20 16s-9 16-20 16q-3 0-6-.7Q15 45 10 45q3-3 2-6Q4 34 4 26c0-9 9-16 20-16z" fill="url(#sky)"/><path d="M31 26q12 1 12 10 0 5-4 7 0 2 1 4-4 0-6-2-15 1-15-9 0-9 12-10z" fill="#f4f8fb"/><g fill="#1c5db4"><circle cx="25" cy="36" r="1.800"/><circle cx="31" cy="36" r="1.800"/><circle cx="37" cy="36" r="1.800"/></g></svg>
<svg viewBox="0 0 50 62"><g transform="rotate(-6 25 28)"><path d="M10 9h31v37H10z" fill="#fbfbf8"/><path d="M10 9h31v7H10z" fill="#ffd91e"/><path d="M11 20h29M11 24h29M11 28h29M11 32h29M11 36h29M11 40h29" stroke="#cacaca" stroke-width=".8"/></g></svg>
<svg viewBox="0 0 50 62"><g transform="rotate(-6 25 28)"><path d="M9 10h34v34H9z" fill="#f6f3e9"/><path d="M25 10h18v18Q30 26 25 10z" fill="#7bd269"/><path d="M9 27q20 2 24 17h-8L9 32z" fill="#f7c52c"/><path d="M9 36h7v8H9z" fill="#f6a2b2"/><path d="M15 10v20" stroke="#2779e8" stroke-width="4"/><path d="M10 11h34v33H10z" fill="none" stroke="#fff" stroke-width="2"/></g><circle cx="16" cy="32" r="5.500" fill="#2878e8"/><path d="m16 28 3 7-3-1.500-3 1.500z" fill="#fff"/><circle cx="36" cy="37" r="9.500" fill="#eceff1" stroke="#b6c0c6"/><circle cx="36" cy="37" r="6" fill="#fff" stroke="#8aa"/><text x="36" y="40" text-anchor="middle" font-size="7" fill="#345">3D</text></svg>
<svg viewBox="0 0 50 62"><circle cx="25" cy="28" r="19.500" fill="#f2f2f2"/><g fill-opacity=".85"><rect x="20" y="11" width="10" height="16" rx="5" fill="#fa9a1b"/><rect x="20" y="11" width="10" height="16" rx="5" fill="#ecd52a" transform="rotate(45 25 28)"/><rect x="20" y="11" width="10" height="16" rx="5" fill="#8fc63c" transform="rotate(90 25 28)"/><rect x="20" y="11" width="10" height="16" rx="5" fill="#49b98c" transform="rotate(135 25 28)"/><rect x="20" y="11" width="10" height="16" rx="5" fill="#5dabe6" transform="rotate(180 25 28)"/><rect x="20" y="11" width="10" height="16" rx="5" fill="#9571c8" transform="rotate(225 25 28)"/><rect x="20" y="11" width="10" height="16" rx="5" fill="#e25b8c" transform="rotate(270 25 28)"/><rect x="20" y="11" width="10" height="16" rx="5" fill="#f04a31" transform="rotate(315 25 28)"/></g></svg>
<svg viewBox="0 0 50 62"><rect x="5" y="11" width="36" height="32" rx="5" fill="url(#green)"/><rect x="11" y="20" width="18" height="14" rx="3" fill="#f6f6f6"/><path d="m30 25 7-5v12z" fill="#f6f6f6"/><circle cx="35" cy="35" r="10" fill="#f2f4f3"/><path d="M30 30q2-2 3 1l-1 2q1 3 4 4l2-1q3 1 1 4-8 0-9-10z" fill="#10c844"/></svg>
<svg viewBox="0 0 50 62"><circle cx="25" cy="28" r="18.500" fill="#f8f7fb" stroke="url(#song)" stroke-width="3"/><path d="M20 37V19l13-3v18" fill="none" stroke="url(#song)" stroke-width="3"/><ellipse cx="17.500" cy="37" rx="4" ry="3.500" fill="#7c54ee"/><ellipse cx="30" cy="34" rx="4" ry="3.500" fill="#4c8af5"/></svg>
<svg viewBox="0 0 50 62"><circle cx="25" cy="28" r="19" fill="url(#orange)" stroke="#eee6df" stroke-width="1.800"/><path d="M25 21q-6-5-12-2v18q7-2 12 1 5-3 12-1V19q-6-3-12 2z" fill="#fff"/><path d="M25 21v17" stroke="#d9b79b"/></svg>
<svg viewBox="0 0 50 62"><circle cx="25" cy="28" r="19" fill="url(#sky)" stroke="#e7edf3" stroke-width="1.800"/><path d="m27 16-11 20M23 16l12 21M12 32h17M33 32h6" stroke="#fff" stroke-width="3" stroke-linecap="round"/><circle cx="40" cy="14" r="8.500" fill="#ee131b"/><text x="40" y="17.500" text-anchor="middle" font-size="9.500" fill="#fff">2</text></svg>
<svg viewBox="0 0 50 62"><rect x="6.500" y="10" width="37" height="37" rx="8" fill="#fff"/><path d="m31 13 7 4v23l-7 4-19-18 3-3 16 13V21L15 33l-3-3z" fill="#1479c9"/></svg>
<svg viewBox="0 0 50 62"><path d="M5 10h38v37H5z" fill="url(#steel)"/><circle cx="24" cy="29" r="14" fill="#8e9496" stroke="#333" stroke-width="3"/><circle cx="24" cy="29" r="15.500" fill="none" stroke="#333" stroke-width="2" stroke-dasharray="1.500 1.500"/><circle cx="24" cy="29" r="4" fill="#aaa" stroke="#333" stroke-width="2"/><path d="M28 29h10M22 33l-5 8M22 25l-5-8" stroke="#333" stroke-width="3"/><circle cx="40" cy="14" r="8.500" fill="#ee131b"/><text x="40" y="17.500" text-anchor="middle" font-size="9.500" fill="#fff">3</text><circle cx="24" cy="58" r="2" fill="#b08be0"/></svg>
<svg viewBox="0 0 50 62"><path d="M8 10h27l8 9v25q0 3-3 3H9q-3 0-3-3V12q0-2 2-2z" fill="#4275f7"/><path d="M17.500 40V26q0-6 7.500-6t7.500 6v14" fill="none" stroke="#fff" stroke-width="6"/></svg>
<svg viewBox="0 0 50 62"><g transform="rotate(-7 22 28)"><path d="M10 11h34v30H10z" fill="#d9d9d9" transform="rotate(7 22 28)"/><path d="M5 14h37v28H5z" fill="#fff"/><path d="M6 15h17v12H6zM25 15h16v12H25zM6 29h17v12H6zM25 29h16v12H25z" fill="#b31a1b"/><path d="M10 27q-1-11 5-11t5 11zM28 27q-1-11 5-11t5 11zM10 41q-1-11 5-11t5 11z" fill="#231a1a"/><g fill="#dba184"><ellipse cx="15" cy="21" rx="2.800" ry="3.500"/><ellipse cx="33" cy="21" rx="2.800" ry="3.500"/><ellipse cx="15" cy="35" rx="2.800" ry="3.500"/></g></g><circle cx="36" cy="37" r="9.500" fill="#3a3b40"/><circle cx="36" cy="35" r="4.500" fill="#17181f" stroke="#666"/><circle cx="36" cy="35" r="2" fill="#5a6ea5"/></svg>
<div class="dsep"><i></i></div>
<svg viewBox="0 0 50 62"><rect x="6.500" y="10" width="37" height="37" rx="8" fill="#f5f5f5"/><circle cx="25" cy="28" r="15.500" fill="#fcc934"/><path d="M25 28 11.600 20.200A15.500 15.500 0 0 1 38.400 20.200H25z" fill="#e33b2e"/><path d="M11.600 20.200A15.500 15.500 0 0 0 24 43.500l6.500-11L25 28z" fill="#2da14c"/><circle cx="25" cy="28" r="7.800" fill="#fff"/><circle cx="25" cy="28" r="6" fill="#2f72e8"/><circle cx="25" cy="58" r="2" fill="#b9a2e4"/></svg>
<svg viewBox="0 0 50 62"><rect x="7" y="10" width="37" height="37" rx="8" fill="#fb0908"/><path d="m20 19 9 9-9 9-9-9z" fill="#fff"/><path d="m27 20 8 8-8 8" fill="none" stroke="#fff" stroke-width="3.200"/><circle cx="25" cy="58" r="2" fill="#a897cf"/></svg>
<svg viewBox="0 0 50 62"><path d="M4 7h42v41H4z" fill="#321500" stroke="#d9800e" stroke-width="2"/><text x="25" y="35" text-anchor="middle" font-size="25" font-weight="600" textLength="22" lengthAdjust="spacingAndGlyphs" font-family="Open Sans" fill="#ff8d0a">Ai</text><circle cx="25" cy="58" r="2" fill="#a18fc4"/></svg>
<svg viewBox="0 0 50 62"><path d="M23 12h21v32H23z" fill="#fafafa"/><path d="M28 17h14M28 21h14M28 25h14M28 29h14M28 33h14M28 37h14" stroke="#222" stroke-width="1.500"/><path d="m4 11 23-3v40L4 45z" fill="#2f65b5"/><text x="15" y="34" text-anchor="middle" font-size="16" font-weight="700" textLength="14" lengthAdjust="spacingAndGlyphs" fill="#fff">W</text><circle cx="25" cy="58" r="2" fill="#9f97b4"/></svg>
<div class="dsep"><i></i></div>
<svg viewBox="0 0 50 62"><path d="M9 12h32l-3 32q-1 4-13 4t-13-4z" fill="#505255"/><path d="m15 20 3 22M31 20l-2 24M20 26l12 8" stroke="#77797c" stroke-width="2" opacity=".7"/><ellipse cx="25" cy="12" rx="16" ry="4" fill="#292a2c" stroke="#999"/><path d="m11 12 4-6 5 2 4-2 5 2 4-1 5 5-6 2-5-1-5 2-5-2z" fill="#ecebe8"/><path d="m17 9 3 3M24 8l2 4M31 9l-2 3" stroke="#555" stroke-width="1.500"/><path d="m21 11 4 2" stroke="#23a6c8" stroke-width="2"/></svg>
</footer>
</div>
<script src="https://cdn.jsdelivr.net/npm/bootstrap@5.3.0/dist/js/bootstrap.bundle.min.js"></script>
<script>
// Condense or widen each label so that it fills its own measure.
document.querySelectorAll('.fit').forEach(function (el) {
  var w = parseFloat(el.dataset.w), inner = document.createElement('span');
  inner.dir = el.dir || 'ltr';
  inner.textContent = el.textContent;
  el.textContent = '';
  el.appendChild(inner);
  el.style.width = w + 'px';
  inner.style.transform = 'scaleX(' + (w / inner.offsetWidth) + ')';
});
</script>
</body>
</html>
